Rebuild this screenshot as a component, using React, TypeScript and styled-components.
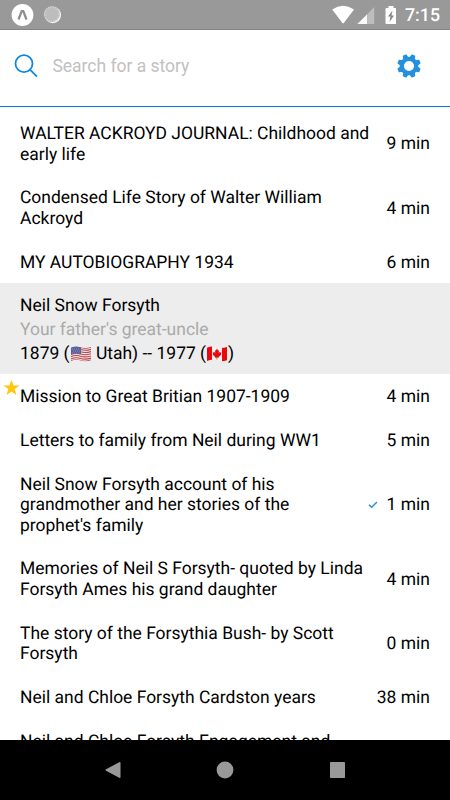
import React from 'react';
import styled, { createGlobalStyle } from 'styled-components';

const GlobalStyle = createGlobalStyle`
  * { box-sizing: border-box; }
  body { margin: 0; background: #fff; }
`;

const Screen = styled.div`
  width: 450px;
  height: 800px;
  display: flex;
  flex-direction: column;
  overflow: hidden;
  background: #fff;
  color: #000;
  font-family: Roboto, sans-serif;
  font-size: 17.48px;
  line-height: 20.5px;
  text-rendering: geometricPrecision;
`;

const StatusBar = styled.header`
  height: 30px;
  flex: none;
  display: flex;
  align-items: center;
  justify-content: space-between;
  padding: 0 10px 0 11px;
  background: #999;
  border-bottom: 1px solid #858585;
`;

const StatusGroup = styled.div`
  display: flex;
  align-items: center;
  svg { display: block; }
`;

const Clock = styled.time`
  width: 35px;
  margin-left: 9px;
  color: #fff;
  font-size: 17.8px;
  font-weight: 500;
  line-height: 30px;
  padding-top: 3px;
  white-space: nowrap;
`;

const SearchBar = styled.div`
  height: 77px;
  flex: none;
  display: flex;
  align-items: center;
  padding: 0 29px 5px 14px;
  border-bottom: 1px solid #0b78d0;
`;

const SearchInput = styled.input`
  flex: 1;
  min-width: 0;
  margin: 0 0 0 14.4px;
  padding: 0;
  border: 0;
  outline: 0;
  background: transparent;
  font: inherit;
  height: 24px;
  &::placeholder { color: #c1c1c1; opacity: 1; }
`;

const IconButton = styled.button`
  width: 24px;
  height: 24px;
  padding: 0;
  border: 0;
  background: none;
  svg { display: block; }
`;

const StoryList = styled.main`
  flex: 1;
  min-height: 0;
  overflow: hidden;
  padding-top: 5.4px;
`;

const StoryRow = styled.article`
  position: relative;
  display: flex;
  align-items: center;
  justify-content: space-between;
  padding: 11.65px 20px;
`;

const StoryTitle = styled.div`
  white-space: pre;
`;

const Duration = styled.div`
  display: flex;
  align-items: center;
  gap: 9px;
  white-space: nowrap;
`;

const StarBadge = styled.svg`
  position: absolute;
  left: 3px;
  top: 4px;
`;

const PersonHeader = styled.section`
  height: 91.6px;
  margin: -2.1px 0 1.1px;
  padding: 11.4px 20px 0;
  background: #ededed;
  line-height: 24px;
`;

const Relation = styled.div`
  color: #aaa;
`;

const Lifespan = styled.div`
  display: flex;
  align-items: center;
  white-space: pre;
`;

const NavBar = styled.nav`
  height: 60px;
  flex: none;
  display: grid;
  grid-template-columns: repeat(3, 112.5px);
  justify-content: center;
  align-items: center;
  justify-items: center;
  background: #000;
`;

const UsFlag = () => (
  <svg width="22" height="18" viewBox="-.5 0 22 18" aria-label="United States">
    <clipPath id="us"><path d="M.5 2.8Q5 .5 10 2.2T20.5 2V15.2Q15.500 17 10.500 15.500T.5 16Z" /></clipPath>
    <g clipPath="url(#us)">
      <path fill="#f3e8e8" d="M0 0h21v18H0z" />
      <path fill="none" stroke="#b8454d" strokeWidth="1.1" d="M0 3Q5 .8 10 2.400T21 2M0 5.200Q5 3 10 4.600T21 4.200M0 7.400Q5 5.200 10 6.800T21 6.400M0 9.600Q5 7.400 10 9T21 8.600M0 11.800Q5 9.600 10 11.200T21 10.800M0 14Q5 11.800 10 13.400T21 13M0 16Q5 13.900 10 15.500T21 15" />
      <path fill="#5560a0" d="M0 2.800Q5 .5 10.500 2.300V9Q5 7.800 0 9.700Z" />
      <path stroke="#a9afd0" strokeWidth=".8" strokeDasharray=".8 1.3" d="M1.500 4H10M2.500 6H10M1.500 8H10" />
    </g>
  </svg>
);

const CanadaFlag = () => (
  <svg width="22" height="18" viewBox="-.5 0 22 18" aria-label="Canada">
    <clipPath id="ca"><path d="M.5 2.800Q5 .5 10 2.200T20.500 2V15.200Q15.500 17 10.500 15.500T.5 16Z" /></clipPath>
    <g clipPath="url(#ca)">
      <path fill="#f7efef" d="M0 0h21v18H0z" />
      <path fill="#e8080e" d="M0 0h5.500v18H0zM15.500 0H21v18h-5.500z" />
      <path fill="#e8080e" d="m10.500 3.600 1.100 2 .9-.3-.3 2.600 1.300-1.200.4.900 1-.1-.5 1.600.5.500-2.800 2.300.2.800-1.600-.2v2.100h-.6v-2.100l-1.600.2.200-.8-2.600-2.300.5-.5-.5-1.600 1 .1.400-.9 1.300 1.200-.3-2.600.9.300z" />
    </g>
  </svg>
);

const Check = () => (
  <svg width="10" height="8" viewBox="0 0 10 8" fill="none" stroke="#2590dc" strokeWidth="1.5">
    <path d="m1 3.700 2.600 2.500L9 1" />
  </svg>
);

interface Story {
  title: string;
  minutes: number;
  starred?: boolean;
  read?: boolean;
}

const ownStories: Story[] = [
  { title: 'WALTER ACKROYD JOURNAL: Childhood and\nearly life', minutes: 9 },
  { title: 'Condensed Life Story of Walter William\nAckroyd', minutes: 4 },
  { title: 'MY AUTOBIOGRAPHY 1934', minutes: 6 },
];

const neilStories: Story[] = [
  { title: 'Mission to Great Britian 1907-1909', minutes: 4, starred: true },
  { title: 'Letters to family from Neil during WW1', minutes: 5 },
  { title: "Neil Snow Forsyth account of his\ngrandmother and her stories of the\nprophet's family", minutes: 1, read: true },
  { title: 'Memories of Neil S Forsyth- quoted by Linda\nForsyth Ames his grand daughter', minutes: 4 },
  { title: 'The story of the Forsythia Bush- by Scott\nForsyth', minutes: 0 },
  { title: 'Neil and Chloe Forsyth Cardston years', minutes: 38 },
];

const StoryItem = ({ title, minutes, starred, read }: Story) => (
  <StoryRow>
    {starred && (
      <StarBadge width="17" height="17" viewBox="0 0 17 17">
        <path fill="#ffc709" d="m8.500.7 2 5.700h6l-4.800 3.700 1.700 5.900-4.900-3.500L3.600 16l1.700-5.900L.5 6.400h6z" />
      </StarBadge>
    )}
    <StoryTitle>{title}</StoryTitle>
    <Duration>
      {read && <Check />}
      {minutes} min
    </Duration>
  </StoryRow>
);

const gearTeeth = Array.from({ length: 8 }, (_, i) => i * 45 + 22.5);

export default function App() {
  return (
    <Screen>
      <GlobalStyle />
      <StatusBar>
        <StatusGroup>
          <svg width="52" height="24" viewBox="0 0 52 24">
            <circle cx="11.500" cy="12" r="10.900" fill="#fff" />
            <path d="m7.500 16.500 3.200-8.500h1.600l3.200 8.500" fill="none" stroke="#8e8e8e" strokeWidth="2.200" />
            <circle cx="41.800" cy="12" r="8.300" fill="#f5f5f5" />
            <circle cx="40.900" cy="11.200" r="8" fill="#bdbdbd" />
            <circle cx="40.900" cy="11.200" r="7.200" fill="none" stroke="#dedede" strokeWidth="1.300" strokeDasharray=".8 1.500" />
          </svg>
        </StatusGroup>
        <StatusGroup>
          <svg width="65" height="20" viewBox="0 0 65 20">
            <path fill="#fff" d="M1.200 4.500Q12-2.900 23 4.500L12.800 18Q12.100 18.800 11.400 18Z" />
            <path fill="#bdbdbd" d="M43.200 2v17H27Z" />
            <path fill="#fff" d="M36 9.500V19H26.400Z" />
            <path fill="#fff" d="M57.500 1h5v2h1.700q1 0 1 1v14q0 1-1 1h-8.700q-1 0-1-1V4q0-1 1-1h2z" />
            <path fill="#858585" d="m61.500 5.500-4.500 6h2.500L58.500 17l4.500-6.500h-2.500z" />
          </svg>
          <Clock>7:15</Clock>
        </StatusGroup>
      </StatusBar>
      <SearchBar>
        <svg width="24" height="24" viewBox="0 0 24 24" fill="none" stroke="#0f86dc" strokeWidth="1.800">
          <circle cx="10" cy="9.700" r="8.500" />
          <path d="m16 15.700 7 7" />
        </svg>
        <SearchInput placeholder="Search for a story" />
        <IconButton aria-label="Settings">
          <svg width="24" height="24" viewBox="0 0 24 24">
            <circle cx="12" cy="12" r="7.200" fill="none" stroke="#2491df" strokeWidth="4.200" />
            {gearTeeth.map((angle) => (
              <path key={angle} fill="#2491df" transform={`rotate(${angle} 12 12)`} d="M9 4.500 9.900.8Q10 .2 10.700.2h2.600q.7 0 .8.600L15 4.500z" />
            ))}
          </svg>
        </IconButton>
      </SearchBar>
      <StoryList>
        {ownStories.map((story) => <StoryItem key={story.title} {...story} />)}
        <PersonHeader>
          <div>Neil Snow Forsyth</div>
          <Relation>Your father's great-uncle</Relation>
          <Lifespan>1879 (<UsFlag /> Utah) -- 1977 (<CanadaFlag />)</Lifespan>
        </PersonHeader>
        {neilStories.map((story) => <StoryItem key={story.title} {...story} />)}
        <StoryRow>
          <StoryTitle>{'Neil and Chloe Forsyth Engagement and'}</StoryTitle>
        </StoryRow>
      </StoryList>
      <NavBar>
        <svg width="16" height="18" viewBox="0 0 16 18"><path fill="#999" d="M15.500 2v14q0 1.500-1.300.7L1 9.700Q0 9 1 8.300l13.200-7q1.300-.8 1.300.7z" /></svg>
        <svg width="18" height="18" viewBox="0 0 18 18"><circle cx="9" cy="9" r="8.400" fill="#999" /></svg>
        <svg width="16" height="16" viewBox="0 0 16 16"><rect width="15" height="16" rx=".7" fill="#999" /></svg>
      </NavBar>
    </Screen>
  );
}
